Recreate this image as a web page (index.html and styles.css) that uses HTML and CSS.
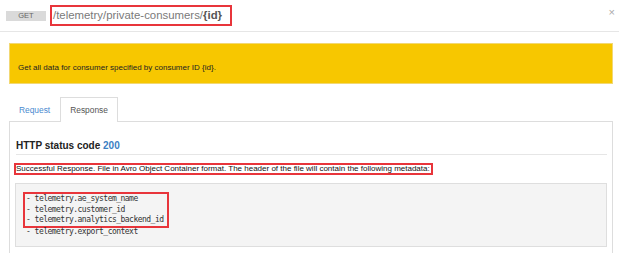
FILE: index.html
```html
<!DOCTYPE html>
<html lang="en">
<head>
    <meta charset="UTF-8">
    <title>GET /telemetry/private-consumers/{id}</title>
    <link rel="stylesheet" href="styles.css">
</head>
<body>
    <div class="modal-header">
        <span class="method">GET</span>
        <span class="path highlight">/telemetry/private-consumers/<b>{id}</b></span>
        <span class="close">&times;</span>
    </div>

    <div class="modal-body">
        <div class="summary">Get all data for consumer specified by consumer ID {id}.</div>

        <div class="tabs">
            <span class="tab">Request</span>
            <span class="tab active">Response</span>
        </div>

        <div class="tab-panel">
            <h4 class="status">HTTP status code <span class="code">200</span></h4>
            <p class="desc highlight">Successful Response. File in Avro Object Container format. The header of the file will contain the following metadata:</p>
            <div class="code-block">
                <div class="highlight">
                    <div>- telemetry.ae_system_name</div>
                    <div>- telemetry.customer_id</div>
                    <div>- telemetry.analytics_backend_id</div>
                </div>
                <div class="extra">- telemetry.export_context</div>
            </div>
        </div>
    </div>
</body>
</html>
```

FILE: styles.css
```css
:root {
    --yellow: #f7c700;
    --border: #dddddd;
    --red: #e8353b;
    --blue: #3b80c3;
    --text: #222222;
}

body {
    margin: 0;
    font-family: "Liberation Sans", Arial, sans-serif;
    color: var(--text);
    background: #ffffff;
    overflow: hidden;
}

.highlight {
    border: 2px solid var(--red);
}

/* header */
.modal-header {
    display: flex;
    align-items: center;
    height: 31px;
    padding-left: 6px;
    border-bottom: 1px solid #e6e6e6;
}

.method {
    width: 40px;
    height: 10px;
    line-height: 10px;
    background: #dadada;
    color: #666;
    font-size: 7.5px;
    text-align: center;
    margin-right: 4px;
}

.path {
    box-sizing: border-box;
    height: 21px;
    line-height: 17px;
    padding: 0 8px 0 1px;
    font-size: 11.4px;
    color: #7a7a7a;
}

.path b {
    color: #555;
}

.close {
    margin-left: auto;
    margin-right: 4px;
    margin-top: -8px;
    color: #aaa;
    font-size: 11px;
}

/* body */
.modal-body {
    padding: 11px 6px 0 9px;
}

.summary {
    background: var(--yellow);
    border: 1px solid #f2d873;
    padding: 19px 8px 10px;
    font-size: 8px;
    line-height: 10px;
    color: #222;
}

.tabs {
    display: flex;
    margin-top: 13px;
    border-bottom: 1px solid var(--border);
}

.tab {
    padding: 0 9px;
    height: 23px;
    line-height: 24px;
    font-size: 8.4px;
    color: #4a8ad0;
    border: 1px solid transparent;
    border-bottom: none;
}

.tab.active {
    color: #555;
    background: #fff;
    border-color: var(--border);
    margin-bottom: -1px;
    height: 24px;
}

.tab-panel {
    border-left: 1px solid var(--border);
    border-right: 1px solid var(--border);
    padding: 0 5px 6px 6px;
}

.status {
    margin: 0;
    padding-top: 17px;
    padding-bottom: 1px;
    line-height: 14px;
    font-size: 10px;
    font-weight: bold;
    border-bottom: 1px solid #e6e6e6;
}

.status .code {
    color: var(--blue);
}

.desc {
    display: inline-block;
    margin: 8px 0 0 -2px;
    font-size: 8px;
    line-height: 8px;
    color: #111;
    padding-right: 1px;
}

.code-block {
    margin-top: 8px;
    margin-left: -1px;
    background: #f4f4f4;
    border: 1px solid #dedede;
    padding: 8px 7px 9px 7px;
    font-family: "DejaVu Sans Mono", "Liberation Mono", monospace;
    font-size: 8px;
    letter-spacing: -0.52px;
    line-height: 10.5px;
    color: #333;
}

.code-block .highlight {
    display: inline-block;
    padding: 0 3px 0 1px;
}

.code-block .extra {
    margin-left: 3px;
    margin-top: -1px;
}
```
